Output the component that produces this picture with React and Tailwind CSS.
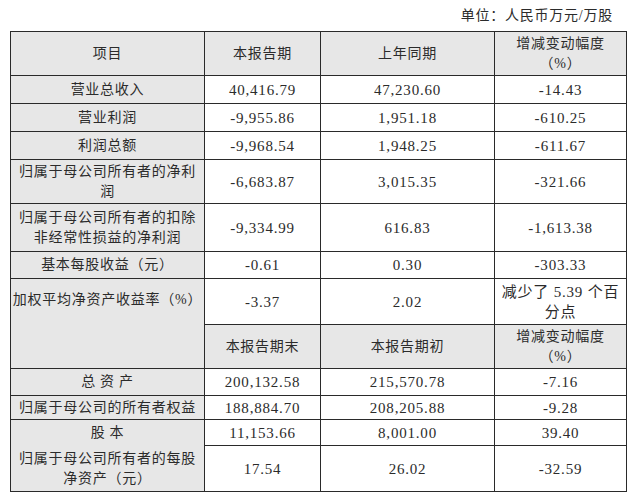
const LABEL = 'bg-[#e7e7e7]'

const ROWS = [
  { h: 'h-[28px]', label: '营业总收入', vals: ['40,416.79', '47,230.60', '-14.43'] },
  { h: 'h-[28px]', label: '营业利润', vals: ['-9,955.86', '1,951.18', '-610.25'] },
  { h: 'h-[28px]', label: '利润总额', vals: ['-9,968.54', '1,948.25', '-611.67'] },
  { h: 'h-[44px]', label: ['归属于母公司所有者的净利', '润'], vals: ['-6,683.87', '3,015.35', '-321.66'] },
  { h: 'h-[48px]', label: ['归属于母公司所有者的扣除', '非经常性损益的净利润'], vals: ['-9,334.99', '616.83', '-1,613.38'] },
  { h: 'h-[27px]', label: '基本每股收益（元）', vals: ['-0.61', '0.30', '-303.33'] },
]

const ROWS2 = [
  { h: 'h-[27px]', label: '总 资 产', vals: ['200,132.58', '215,570.78', '-7.16'] },
  { h: 'h-[24px]', label: '归属于母公司的所有者权益', vals: ['188,884.70', '208,205.88', '-9.28'] },
  { h: 'h-[26px]', label: '股 本', vals: ['11,153.66', '8,001.00', '39.40'], open: true },
  { h: 'h-[46px]', label: ['归属于母公司所有者的每股', '净资产（元）'], vals: ['17.54', '26.02', '-32.59'] },
]

function Lines({ text }) {
  if (!Array.isArray(text)) return text
  return text.map((t, i) => <span key={i} className="block">{t}</span>)
}

function Cell({ children, className = '', num }) {
  return (
    <div className={`border-r border-b border-[#2a2a2a] flex items-center justify-center text-center whitespace-nowrap leading-[20px] ${num ? 'text-[15px] tracking-[0.8px]' : 'text-[14px] tracking-[0.75px]'} ${className}`}>
      {children}
    </div>
  )
}

function DataRow({ row }) {
  return (
    <>
      <Cell className={`${LABEL} ${row.h} ${row.open ? 'border-b-0' : ''}`}><div><Lines text={row.label} /></div></Cell>
      {row.vals.map((v, i) => <Cell key={i} num className={`${row.h} bg-white`}>{v}</Cell>)}
    </>
  )
}

export default function App() {
  return (
    <div className="w-[640px] h-[498px] bg-white text-[#2b2b2b] overflow-hidden" style={{ fontFamily: '"Liberation Serif", "Noto Sans CJK SC", serif' }}>
      <div className="w-[627px] h-[31px] flex items-center justify-end pr-[14px] text-[14px] tracking-[0.75px]">单位：人民币万元/万股</div>

      <div className="ml-[10px] w-fit grid grid-cols-[194px_116px_174px_132px] border-l border-t border-[#2a2a2a]">
        <Cell className={`${LABEL} h-[44px]`}>项目</Cell>
        <Cell className={`${LABEL} h-[44px]`}>本报告期</Cell>
        <Cell className={`${LABEL} h-[44px]`}>上年同期</Cell>
        <Cell className={`${LABEL} h-[44px]`}><div><span className="block">增减变动幅度</span><span className="block">（%）</span></div></Cell>

        {ROWS.map((r, i) => <DataRow key={i} row={r} />)}

        <Cell className={`${LABEL} row-span-2 !items-start pt-[11px] tracking-[0.4px]`}>加权平均净资产收益率（%）</Cell>
        <Cell num className="h-[46px] bg-white">-3.37</Cell>
        <Cell num className="h-[46px] bg-white">2.02</Cell>
        <Cell num className="h-[46px] bg-white"><div><span className="block">减少了 5.39 个百</span><span className="block">分点</span></div></Cell>

        <Cell className={`${LABEL} h-[44px]`}>本报告期末</Cell>
        <Cell className={`${LABEL} h-[44px]`}>本报告期初</Cell>
        <Cell className={`${LABEL} h-[44px]`}><div><span className="block">增减变动幅度</span><span className="block">（%）</span></div></Cell>

        {ROWS2.map((r, i) => <DataRow key={i} row={r} />)}
      </div>
    </div>
  )
}
